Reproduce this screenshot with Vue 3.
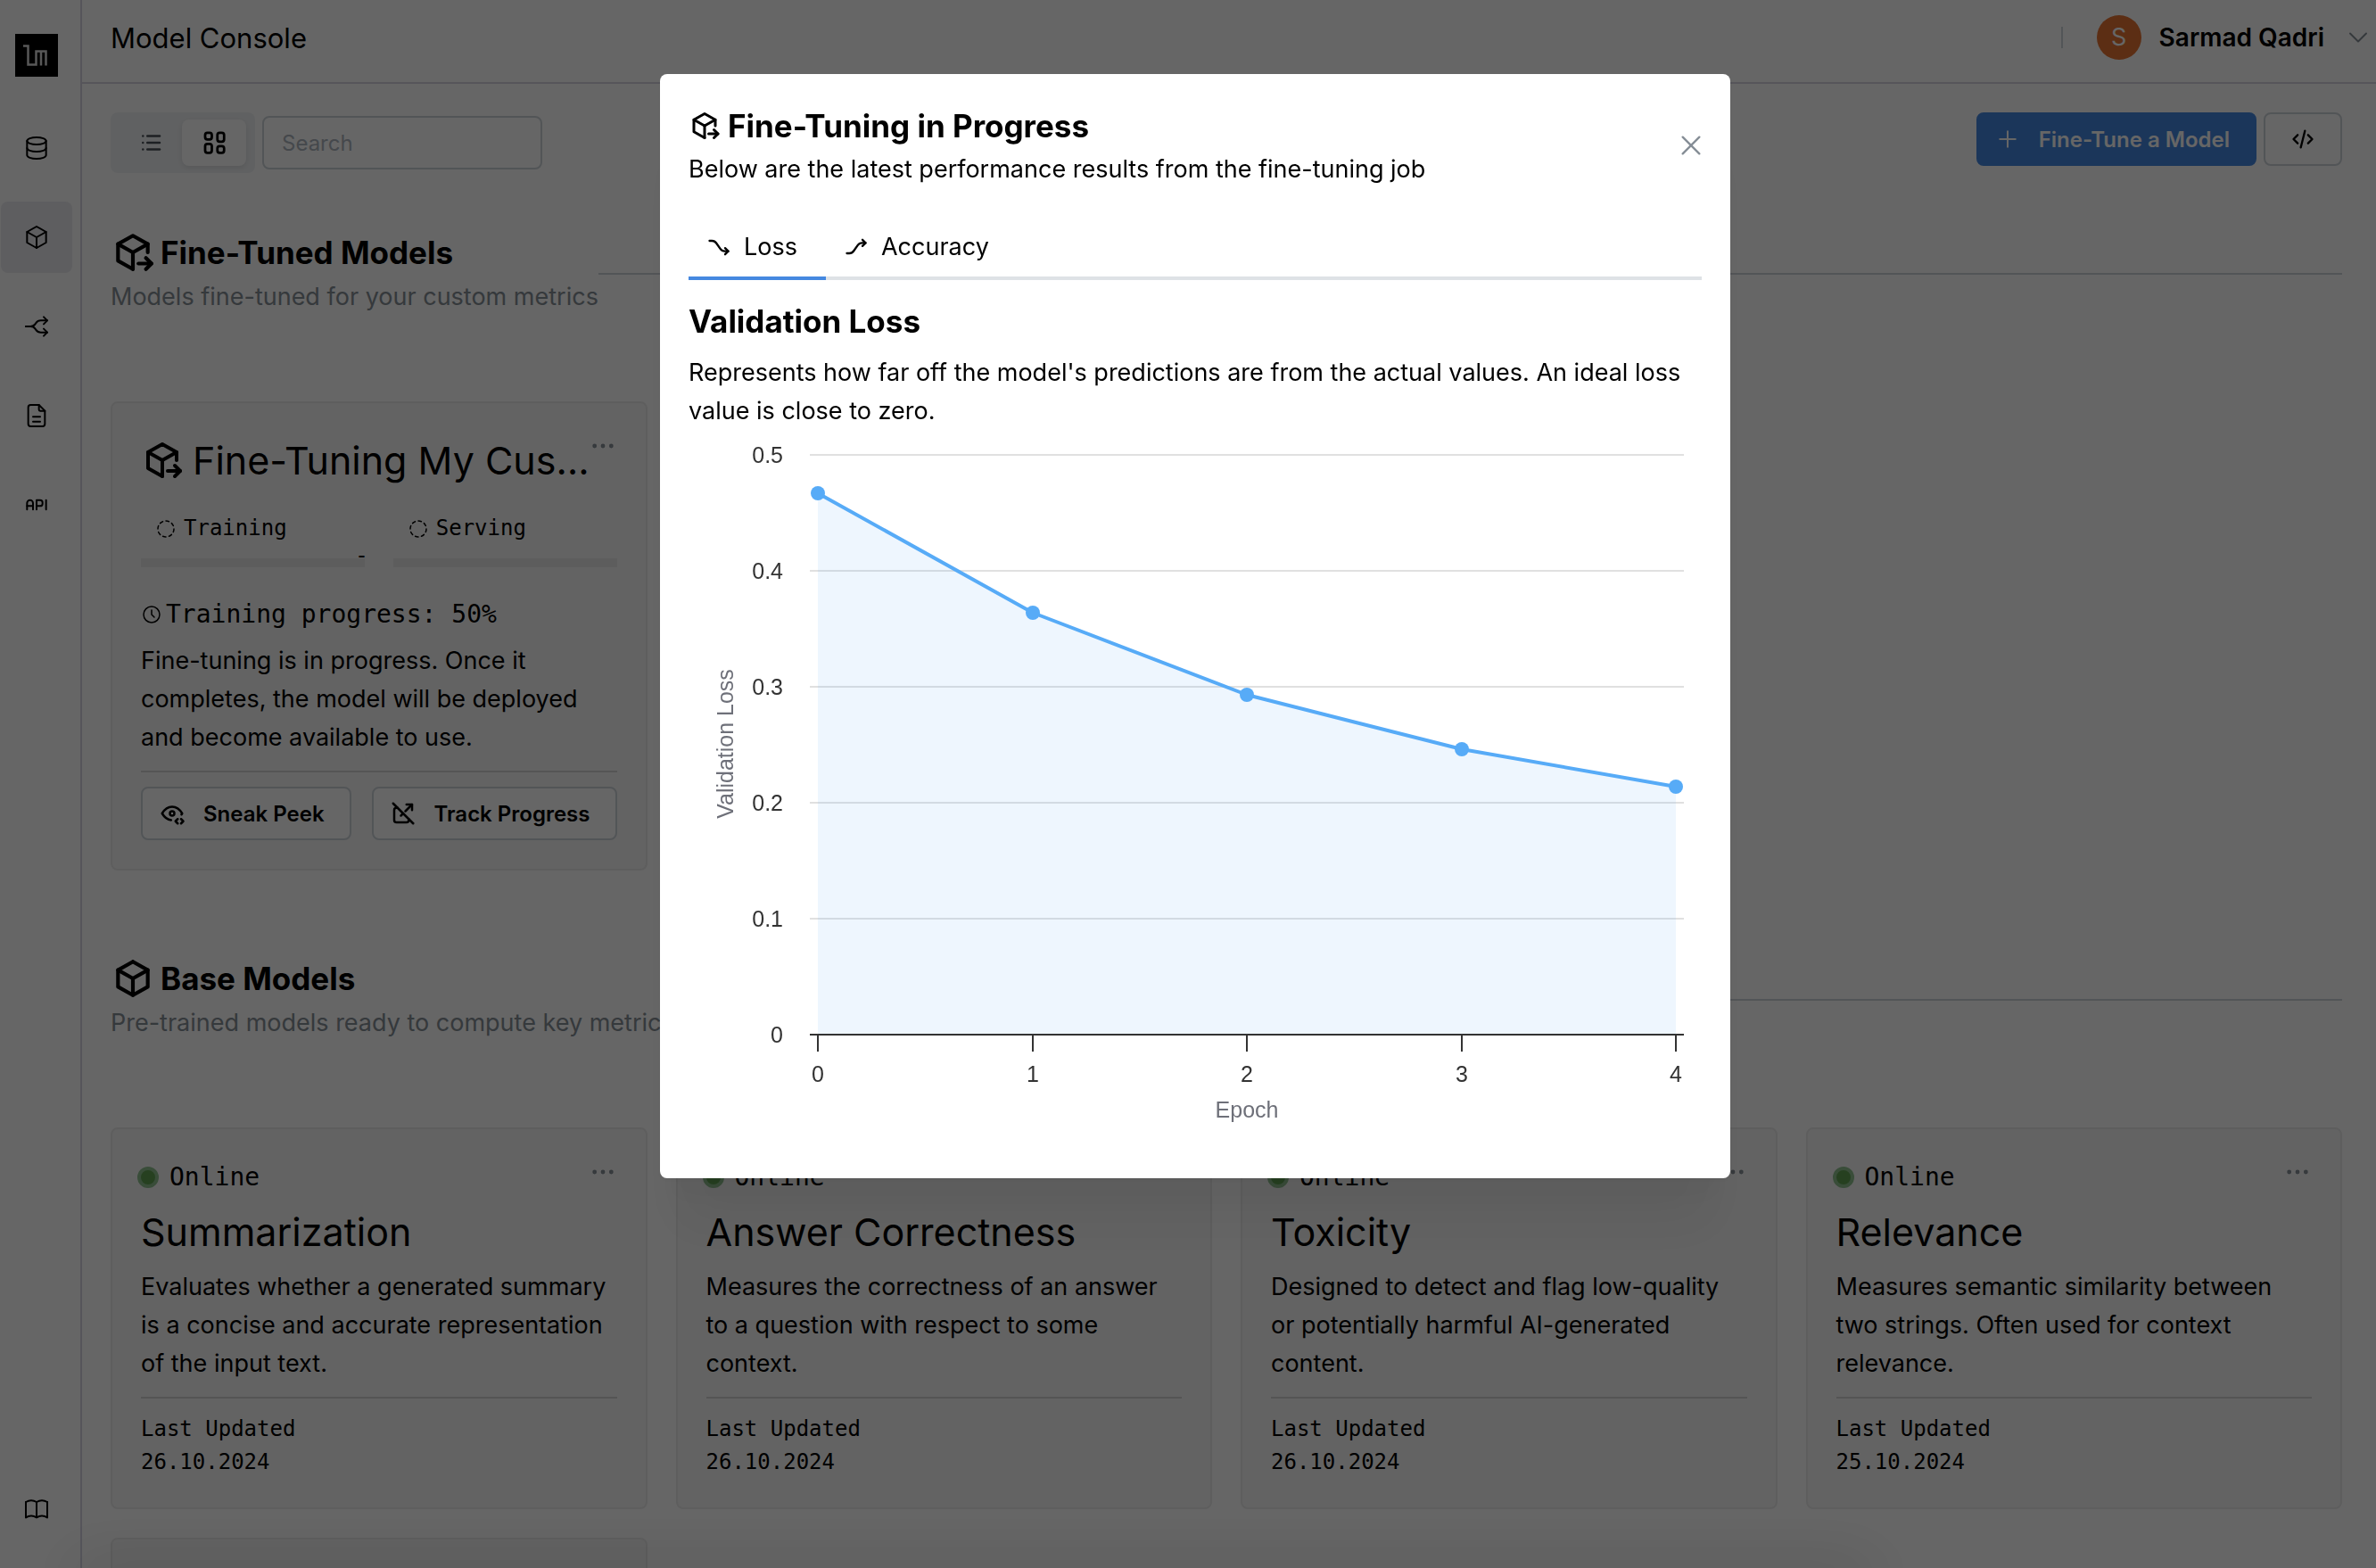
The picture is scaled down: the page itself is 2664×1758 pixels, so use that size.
<script setup>
import { h, ref } from 'vue'

const ICONS = {
  database: ['M12 6m-8 0a8 3 0 1 0 16 0a8 3 0 1 0-16 0', 'M4 6v6a8 3 0 0 0 16 0v-6', 'M4 12v6a8 3 0 0 0 16 0v-6'],
  cube: ['M12 3l8 4.5v9l-8 4.5l-8-4.5v-9l8-4.5', 'M12 12l8-4.5', 'M12 12v9', 'M12 12l-8-4.5'],
  cubeExport: ['M12 21l-8-4.5v-9l8-4.5l8 4.5v4.5', 'M12 12l8-4.5', 'M12 12v9', 'M12 12l-8-4.5', 'M15 18h7', 'M19 15l3 3l-3 3'],
  split: ['M21 17h-5.397a5 5 0 0 1-4.096-2.133l-.514-.734a5 5 0 0 0-4.096-2.133h-3.897', 'M21 7h-5.397a5 5 0 0 0-4.096 2.133l-.514.734a5 5 0 0 1-4.096 2.133h-3.897', 'M18 10l3-3l-3-3', 'M18 20l3-3l-3-3'],
  file: ['M14 3v4a1 1 0 0 0 1 1h4', 'M17 21h-10a2 2 0 0 1-2-2v-14a2 2 0 0 1 2-2h7l5 5v11a2 2 0 0 1-2 2z', 'M9 17h6', 'M9 13h6'],
  api: ['M4 13h5', 'M12 16v-8h3a2 2 0 0 1 2 2v1a2 2 0 0 1-2 2h-3', 'M20 8v8', 'M9 16v-5.5a2.5 2.5 0 0 0-5 0v5.5'],
  book: ['M3 19a9 9 0 0 1 9 0a9 9 0 0 1 9 0', 'M3 6a9 9 0 0 1 9 0a9 9 0 0 1 9 0', 'M3 6v13', 'M12 6v13', 'M21 6v13'],
  list: ['M9 6h11', 'M9 12h11', 'M9 18h11', 'M5 6v.01', 'M5 12v.01', 'M5 18v.01'],
  grid: [
    'M6 3h2a2 2 0 0 1 2 2v2a2 2 0 0 1-2 2h-2a2 2 0 0 1-2-2v-2a2 2 0 0 1 2-2z',
    'M17 3h2a2 2 0 0 1 2 2v4a2 2 0 0 1-2 2h-2a2 2 0 0 1-2-2v-4a2 2 0 0 1 2-2z',
    'M6 13h2a2 2 0 0 1 2 2v4a2 2 0 0 1-2 2h-2a2 2 0 0 1-2-2v-4a2 2 0 0 1 2-2z',
    'M17 15h2a2 2 0 0 1 2 2v2a2 2 0 0 1-2 2h-2a2 2 0 0 1-2-2v-2a2 2 0 0 1 2-2z'
  ],
  chevron: ['M6 9l6 6l6-6'],
  plus: ['M12 5v14', 'M5 12h14'],
  code: ['M7 8l-4 4l4 4', 'M17 8l4 4l-4 4', 'M14 4l-4 16'],
  dots: ['M5 12m-1 0a1 1 0 1 0 2 0a1 1 0 1 0-2 0', 'M12 12m-1 0a1 1 0 1 0 2 0a1 1 0 1 0-2 0', 'M19 12m-1 0a1 1 0 1 0 2 0a1 1 0 1 0-2 0'],
  dashed: ['M8.56 3.69a9 9 0 0 0-2.92 1.95', 'M3.69 8.56a9 9 0 0 0-.69 3.44', 'M3.69 15.44a9 9 0 0 0 1.95 2.92', 'M8.56 20.31a9 9 0 0 0 3.44.69', 'M15.44 20.31a9 9 0 0 0 2.92-1.95', 'M20.31 15.44a9 9 0 0 0 .69-3.44', 'M20.31 8.56a9 9 0 0 0-1.95-2.92', 'M15.44 3.69a9 9 0 0 0-3.44-.69'],
  clock: ['M3 12a9 9 0 1 0 18 0a9 9 0 0 0-18 0', 'M12 7v5l3 3'],
  eyeCode: ['M10 12a2 2 0 1 0 4 0a2 2 0 0 0-4 0', 'M11.11 17.958c-3.209-.307-5.91-2.293-8.11-5.958c2.4-4 5.4-6 9-6c3.6 0 6.6 2 9 6c-.21.352-.427.688-.647 1.008', 'M20 21l2-2l-2-2', 'M17 17l-2 2l2 2'],
  linkOff: ['M7 7h-1a2 2 0 0 0-2 2v9a2 2 0 0 0 2 2h9a2 2 0 0 0 2-2v-1', 'M10 14l2-2m2.007-2.007l6-6', 'M15 4h5v5', 'M3 3l18 18'],
  trendDown: ['M3 6h2.397a5 5 0 0 1 4.096 2.133l4.014 5.734a5 5 0 0 0 4.096 2.133h3.397', 'M18 19l3-3l-3-3'],
  trendUp: ['M3 18h2.397a5 5 0 0 0 4.096-2.133l4.014-5.734a5 5 0 0 1 4.096-2.133h3.397', 'M18 11l3-3l-3-3'],
  close: ['M5 5l14 14', 'M19 5l-14 14']
}

const Icon = (props) =>
  h(
    'svg',
    {
      class: 'icon',
      width: props.size,
      height: props.size,
      viewBox: '0 0 24 24',
      fill: 'none',
      stroke: 'currentColor',
      'stroke-width': props.stroke || 2,
      'stroke-linecap': 'round',
      'stroke-linejoin': 'round',
      'aria-hidden': 'true'
    },
    ICONS[props.name].map((d) => h('path', { d }))
  )
Icon.props = ['name', 'size', 'stroke']

const nav = [
  { icon: 'database', label: 'Datasets' },
  { icon: 'cube', label: 'Models', active: true },
  { icon: 'split', label: 'Pipelines' },
  { icon: 'file', label: 'Logs' },
  { icon: 'api', label: 'API keys' }
]

const baseModels = [
  { name: 'Summarization', text: 'Evaluates whether a generated summary is a concise and accurate representation of the input text.', date: '26.10.2024' },
  { name: 'Answer Correctness', text: 'Measures the correctness of an answer to a question with respect to some context.', date: '26.10.2024' },
  { name: 'Toxicity', text: 'Designed to detect and flag low-quality or potentially harmful AI-generated content.', date: '26.10.2024' },
  { name: 'Relevance', text: 'Measures semantic similarity between two strings. Often used for context relevance.', date: '25.10.2024' }
]

const search = ref('')

// Chart geometry, in viewBox units
const X0 = 145
const X1 = 1107
const YB = 678
const losses = [0.467, 0.364, 0.293, 0.246, 0.214]
const points = losses.map((v, i) => ({
  x: Math.round(X0 + ((X1 - X0) * i) / 4),
  y: Math.round(YB - v * 1300),
  epoch: i
}))
const line = points.map((p) => `${p.x},${p.y}`).join(' ')
const area = `${X0},${YB} ${line} ${X1},${YB}`
const gridRows = [0.1, 0.2, 0.3, 0.4, 0.5].map((v) => ({ label: String(v), y: Math.round(YB - v * 1300) }))
</script>

<template>
  <div class="shell">
    <aside class="sidebar">
      <svg class="logo" width="48" height="48" viewBox="0 0 48 48" role="img" aria-label="lm">
        <rect width="48" height="48" fill="#000" />
        <g fill="none" stroke="#ddd" stroke-width="2.5">
          <path d="M9 13.5h5.5v21h9v-15h11v16" />
          <path d="M29 19.5v16" />
        </g>
      </svg>
      <nav class="nav">
        <a v-for="n in nav" :key="n.label" href="#" class="nav-item" :class="{ active: n.active }" :aria-label="n.label">
          <Icon :name="n.icon" size="32" stroke="1.5" />
        </a>
      </nav>
      <a href="#" class="nav-item docs" aria-label="Documentation"><Icon name="book" size="32" stroke="1.5" /></a>
    </aside>

    <div class="page">
      <header class="topbar">
        <h1>Model Console</h1>
        <div class="user">
          <span class="rule"></span>
          <span class="avatar">S</span>
          <span class="user-name">Sarmad Qadri</span>
          <button class="bare" aria-label="Account menu"><Icon name="chevron" size="36" stroke="1.3" /></button>
        </div>
      </header>

      <main>
        <div class="toolbar">
          <div class="segmented">
            <button class="seg" aria-label="List view"><Icon name="list" size="30" stroke="2" /></button>
            <button class="seg on" aria-label="Grid view"><Icon name="grid" size="30" stroke="2.2" /></button>
          </div>
          <input v-model="search" class="search" type="text" placeholder="Search" aria-label="Search" />
          <div class="actions">
            <button class="btn primary"><Icon name="plus" size="30" stroke="1.6" />Fine-Tune a Model</button>
            <button class="btn code" aria-label="View code"><Icon name="code" size="28" stroke="2" /></button>
          </div>
        </div>

        <section>
          <div class="section-head">
            <div>
              <h2><Icon name="cubeExport" size="50" stroke="2" />Fine-Tuned Models</h2>
              <p>Models fine-tuned for your custom metrics</p>
            </div>
            <hr />
          </div>
          <div class="cards">
            <article class="card">
              <button class="bare more" aria-label="Model actions"><Icon name="dots" size="32" stroke="1.6" /></button>
              <h3 class="tuning"><Icon name="cubeExport" size="48" stroke="2" />Fine-Tuning My Cus…</h3>
              <div class="stages">
                <div class="stage">
                  <div class="stage-label"><Icon name="dashed" size="24" stroke="1.5" />Training</div>
                  <div class="bar"></div>
                  <span class="dash">-</span>
                </div>
                <div class="stage">
                  <div class="stage-label"><Icon name="dashed" size="24" stroke="1.5" />Serving</div>
                  <div class="bar"></div>
                </div>
              </div>
              <div class="progress"><Icon name="clock" size="24" stroke="1.5" />Training progress: 50%</div>
              <p class="desc">Fine-tuning is in progress. Once it completes, the model will be deployed and become available to use.</p>
              <hr class="divider" />
              <div class="card-actions">
                <button class="btn"><Icon name="eyeCode" size="30" stroke="2" />Sneak Peek</button>
                <button class="btn"><Icon name="linkOff" size="30" stroke="2" />Track Progress</button>
              </div>
            </article>
          </div>
        </section>

        <section>
          <div class="section-head">
            <div>
              <h2><Icon name="cube" size="50" stroke="2" />Base Models</h2>
              <p>Pre-trained models ready to compute key metrics</p>
            </div>
            <hr />
          </div>
          <div class="cards">
            <article v-for="m in baseModels" :key="m.name" class="card">
              <button class="bare more" aria-label="Model actions"><Icon name="dots" size="32" stroke="1.6" /></button>
              <div class="status"><i></i>Online</div>
              <h3>{{ m.name }}</h3>
              <p class="desc">{{ m.text }}</p>
              <hr class="divider" />
              <div class="updated">Last Updated<br />{{ m.date }}</div>
            </article>
            <article class="card"></article>
          </div>
        </section>
      </main>
    </div>

    <div class="overlay">
      <div class="dock"></div>
      <div class="modal" role="dialog" aria-modal="true" aria-labelledby="dlg-title">
        <div class="modal-head">
          <div>
            <h2 id="dlg-title"><Icon name="cubeExport" size="36" stroke="2" />Fine-Tuning in Progress</h2>
            <p>Below are the latest performance results from the fine-tuning job</p>
          </div>
          <button class="bare close" aria-label="Close"><Icon name="close" size="32" stroke="1.8" /></button>
        </div>
        <div class="tabs" role="tablist">
          <button class="tab on" role="tab" aria-selected="true"><Icon name="trendDown" size="28" stroke="2" />Loss</button>
          <button class="tab" role="tab" aria-selected="false"><Icon name="trendUp" size="28" stroke="2" />Accuracy</button>
        </div>
        <h2 class="metric">Validation Loss</h2>
        <p class="metric-text">Represents how far off the model's predictions are from the actual values. An ideal loss value is close to zero.</p>
        <svg class="chart" viewBox="0 0 1136 807" role="img" aria-label="Validation loss by epoch">
          <line v-for="g in gridRows" :key="g.label" x1="136" x2="1116" :y1="g.y" :y2="g.y" stroke="#e0e0e0" stroke-width="2" />
          <polygon :points="area" fill="#57abf7" fill-opacity="0.1" />
          <line x1="136" x2="1116" :y1="YB" :y2="YB" stroke="#333" stroke-width="2" />
          <g v-for="p in points" :key="p.epoch">
            <line :x1="p.x" :x2="p.x" :y1="YB" :y2="YB + 19" stroke="#333" stroke-width="2" />
            <text class="tick" :x="p.x" :y="YB + 53" text-anchor="middle">{{ p.epoch }}</text>
          </g>
          <text v-for="g in gridRows" :key="'t' + g.label" class="tick" x="106" :y="g.y + 9" text-anchor="end">{{ g.label }}</text>
          <text class="tick" x="106" :y="YB + 9" text-anchor="end">0</text>
          <polyline :points="line" fill="none" stroke="#57abf7" stroke-width="4" stroke-linejoin="round" />
          <circle v-for="p in points" :key="'c' + p.epoch" :cx="p.x" :cy="p.y" r="8" fill="#57abf7" />
          <text class="axis" x="626" y="771" text-anchor="middle">Epoch</text>
          <text class="axis" transform="translate(50 352) rotate(-90)" text-anchor="middle">Validation Loss</text>
        </svg>
      </div>
    </div>
  </div>
</template>

<style>
body {
  margin: 0;
  overflow: hidden;
  background: #fff;
}
.icon {
  display: block;
  flex: none;
}
</style>

<style scoped>
.shell {
  display: flex;
  height: 100vh;
  overflow: hidden;
  color: #000;
  font-family: Inter, "Liberation Sans", sans-serif;
  font-size: 27px;
  line-height: 43px;
}
.shell * {
  box-sizing: border-box;
}
h1, h2, h3, p, hr {
  margin: 0;
  border: 0;
}
button {
  font-family: inherit;
  color: inherit;
  cursor: pointer;
}
.bare {
  padding: 0;
  border: 0;
  background: none;
  color: #868e96;
}
.sidebar {
  display: flex;
  flex: none;
  flex-direction: column;
  width: 92px;
  height: 100vh;
  padding: 38px 0 26px 1px;
  border-right: 2px solid #d7d5e2;
}
.logo {
  display: block;
  margin: 0 0 40px 16px;
}
.nav {
  display: flex;
  flex-direction: column;
  gap: 20px;
}
.nav-item {
  display: grid;
  place-items: center;
  width: 80px;
  height: 80px;
  border-radius: 8px;
  color: #000;
}
.nav-item.active {
  background: #ebebf0;
}
.docs {
  margin-top: auto;
}
.page {
  flex: 1;
  min-width: 0;
}
.topbar {
  display: flex;
  align-items: center;
  justify-content: space-between;
  height: 94px;
  padding: 0 2px 8px 32px;
  border-bottom: 2px solid #d7d5e2;
}
h1 {
  font-size: 31px;
  font-weight: 400;
}
.user {
  display: flex;
  align-items: center;
}
.rule {
  width: 2px;
  height: 24px;
  margin-right: 38px;
  background: #ced4da;
}
.avatar {
  width: 50px;
  height: 50px;
  margin-right: 20px;
  border-radius: 50%;
  background: #e57333;
  color: #fff;
  line-height: 50px;
  text-align: center;
}
.user-name {
  margin-right: 20px;
  font-size: 28px;
  font-weight: 600;
}
main {
  padding: 32px 38px 32px 32px;
}
.toolbar {
  display: flex;
  align-items: center;
  height: 68px;
}
.segmented {
  display: flex;
  height: 68px;
  padding: 8px 10px;
  border-radius: 8px;
  background: #f1f3f5;
}
.seg {
  display: grid;
  place-items: center;
  width: 70px;
  height: 52px;
  padding: 0;
  border: 0;
  border-radius: 8px;
  background: none;
  color: #495057;
}
.seg.on {
  width: 72px;
  background: #fff;
  color: #000;
  box-shadow: 0 2px 6px rgba(0, 0, 0, 0.1);
}
.search {
  width: 314px;
  height: 60px;
  margin-left: 8px;
  padding: 0 20px;
  border: 2px solid #ced4da;
  border-radius: 8px;
  background: #fff;
  font-family: inherit;
  font-size: 24px;
}
.search::placeholder {
  color: #adb5bd;
}
.actions {
  display: flex;
  align-self: flex-start;
  gap: 8px;
  margin-left: auto;
}
.btn {
  display: flex;
  align-items: center;
  gap: 20px;
  height: 60px;
  padding: 0 28px 0 18px;
  border: 2px solid #ced4da;
  border-radius: 8px;
  background: #fff;
  font-size: 24px;
  font-weight: 600;
  white-space: nowrap;
}
.btn.primary {
  border-color: #4588e0;
  background: #4588e0;
  color: #fff;
}
.btn.code {
  justify-content: center;
  width: 88px;
  padding: 0;
}
.section-head {
  display: flex;
  align-items: center;
  margin: 65px 0 96px;
}
.section-head hr {
  flex: 1;
  height: 2px;
  background: #ced4da;
}
.section-head p {
  margin-top: 4px;
  color: #868e96;
}
h2 {
  display: flex;
  align-items: center;
  height: 48px;
  font-size: 35px;
  font-weight: 700;
  line-height: 48px;
}
.section-head h2 {
  gap: 6px;
}
section + section .section-head {
  margin-top: 97px;
}
.cards {
  display: grid;
  grid-template-columns: repeat(4, minmax(0, 1fr));
  gap: 32px;
}
.card {
  position: relative;
  min-height: 427px;
  padding: 32px;
  border: 2px solid #ebebeb;
  border-radius: 8px;
  background: #f8f8f8;
}
.more {
  position: absolute;
  top: 32px;
  right: 32px;
}
h3 {
  height: 64px;
  font-size: 43px;
  font-weight: 400;
  line-height: 64px;
}
.tuning {
  display: flex;
  align-items: center;
  gap: 10px;
  white-space: nowrap;
}
.stages {
  display: grid;
  grid-template-columns: 1fr 1fr;
  gap: 32px;
  margin-top: 26px;
  font-family: "DejaVu Sans Mono", monospace;
  font-size: 24px;
  line-height: 37px;
}
.stage {
  position: relative;
}
.stage-label {
  display: flex;
  align-items: center;
  gap: 8px;
  padding-left: 16px;
}
.bar {
  height: 10px;
  margin-top: 15px;
  background: #e9e9e9;
}
.dash {
  position: absolute;
  right: -4px;
  bottom: -6px;
}
.progress {
  display: flex;
  align-items: center;
  gap: 4px;
  margin: 31px 0 9px;
  font-family: "DejaVu Sans Mono", monospace;
  font-size: 28px;
}
.divider {
  height: 2px;
  margin: 16px 0;
  background: #d4d4d4;
}
.card-actions {
  display: flex;
  justify-content: space-between;
}
.status {
  display: flex;
  align-items: center;
  gap: 12px;
  margin: 0 0 8px -4px;
  font-family: "DejaVu Sans Mono", monospace;
  font-size: 28px;
}
.status i {
  width: 24px;
  height: 24px;
  border: 4px solid #8fc08f;
  border-radius: 50%;
  background: #5fa052;
}
.status + h3 {
  margin-bottom: 8px;
}
.updated {
  font-family: "DejaVu Sans Mono", monospace;
  font-size: 24px;
  line-height: 37px;
}
.overlay {
  position: fixed;
  inset: 0;
  display: flex;
  align-items: flex-start;
  justify-content: center;
  padding: 83px 0 83px 16px;
  background: rgba(0, 0, 0, 0.6);
}
.dock {
  position: absolute;
  right: 560px;
  bottom: -20px;
  left: 80px;
  height: 20px;
  box-shadow: 0 0 70px rgba(0, 0, 0, 0.25);
}
.modal {
  position: relative;
  width: 1200px;
  padding: 32px;
  border-radius: 8px;
  background: #fff;
  box-shadow: 0 2px 6px rgba(0, 0, 0, 0.05), 0 72px 56px -14px rgba(0, 0, 0, 0.05), 0 34px 34px -14px rgba(0, 0, 0, 0.04);
}
.modal-head {
  display: flex;
  justify-content: space-between;
  margin-bottom: 32px;
}
.modal-head h2 {
  gap: 8px;
  margin-top: 2px;
}
.modal-head p {
  margin-top: 3px;
}
.close {
  align-self: flex-start;
  margin: 32px -4px 0 0;
}
.tabs {
  display: flex;
  border-bottom: 4px solid #dee2e6;
}
.tab {
  display: flex;
  align-items: center;
  gap: 14px;
  height: 71px;
  margin-bottom: -4px;
  padding: 0 32px 0 20px;
  border: 0;
  border-bottom: 4px solid transparent;
  background: none;
  font-size: 27px;
}
.tab.on {
  border-color: #4588e0;
}
.metric {
  margin-top: 22px;
}
.metric-text {
  margin-top: 12px;
}
.chart {
  display: block;
  width: 100%;
}
.tick,
.axis {
  fill: #333;
  font-family: "Liberation Sans", Arial, sans-serif;
  font-size: 25px;
}
.axis {
  fill: #6e7079;
}
</style>
